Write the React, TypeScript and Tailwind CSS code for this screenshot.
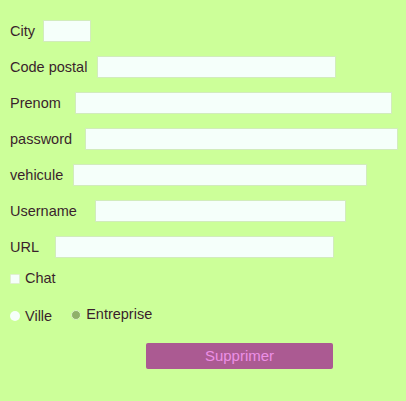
const fields = [
  { label: "City", lw: "w-[33px]", iw: "w-[48px]" },
  { label: "Code postal", lw: "w-[87px]", iw: "w-[239px]" },
  { label: "Prenom", lw: "w-[65px]", iw: "w-[317px]" },
  { label: "password", lw: "w-[75px]", iw: "w-[313px]" },
  { label: "vehicule", lw: "w-[63px]", iw: "w-[294px]" },
  { label: "Username", lw: "w-[85px]", iw: "w-[251px]" },
  { label: "URL", lw: "w-[45px]", iw: "w-[279px]" },
];

export default function App() {
  return (
    <div className="w-[406px] h-[401px] bg-[#ccff99] pl-[10px] pt-[20px] font-['Liberation_Sans',Arial,sans-serif] text-[14.5px] text-[#3a1f2c]">
      {fields.map((f) => (
        <div key={f.label} className="flex items-center h-[22px] mb-[14px]">
          <label className={`${f.lw} shrink-0 pt-[1px]`}>{f.label}</label>
          <input
            type="text"
            className={`${f.iw} h-[22px] bg-[#f5fffa] border border-[#d2ecbc] outline-none`}
          />
        </div>
      ))}

      <div className="flex items-center h-[15px] mt-[-1px]">
        <span className="w-[10px] h-[10px] bg-[#f5fffa] border border-[#e0f0d0] rounded-[1px]" />
        <span className="ml-[5px]">Chat</span>
      </div>

      <div className="flex items-center h-[15px] mt-[21px]">
        <span className="w-[10px] h-[10px] rounded-full bg-[#f5fffa] mt-[2px]" />
        <span className="ml-[5px] mt-[4px]">Ville</span>
        <span className="ml-[19px] w-[10px] h-[10px] rounded-full bg-[#8fb06a] border border-[#d9f0c4]" />
        <span className="ml-[5px]">Entreprise</span>
      </div>

      <div className="pl-[136px] mt-[21px]">
        <button className="w-[187px] h-[26px] rounded-[2px] bg-[#ab5a92] text-[#ec90e6] text-[15px]">
          Supprimer
        </button>
      </div>
    </div>
  );
}
